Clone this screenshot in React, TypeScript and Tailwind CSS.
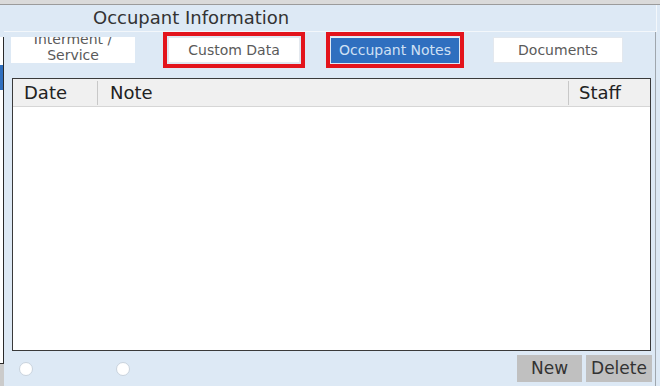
import React from "react";

const tabs = [
  { label: "Custom Data", ml: "ml-[33px]", w: "w-[132px]", marked: true, active: false },
  { label: "Occupant Notes", ml: "ml-[31px]", w: "w-[128px]", marked: true, active: true },
  { label: "Documents", ml: "ml-[34px]", w: "w-[130px]", marked: false, active: false },
];

function Radio() {
  return <div className="w-[14px] h-[14px] rounded-full bg-white border border-[#c9d3dd]" />;
}

export default function App() {
  return (
    <div
      className="w-[660px] h-[386px] bg-[#dde9f5] flex flex-col overflow-hidden"
      style={{ fontFamily: '"DejaVu Sans", sans-serif' }}
    >
      <div className="h-[5px] bg-[#dadada] border-b border-[#9b9b9b]" />
      <div className="flex flex-1 min-h-0">
        {/* edge of the neighbouring panel */}
        <div className="w-[4px] flex flex-col">
          <div className="h-[32px]" />
          <div className="h-[327px] bg-white border-r border-b border-[#2a2a2a] flex flex-col">
            <div className="h-[28px]" />
            <div className="h-[25px] bg-[#2f6fbf]" />
          </div>
          <div className="flex-1 bg-[#cbcbcb]" />
        </div>

        <div className="flex-1 flex flex-col">
          <div className="h-[27px] mr-[3px] border-r border-b border-[#f3f7fb] pl-[89px] flex items-center text-[18px] leading-none text-[#333333]">
            Occupant Information
          </div>

          <div className="border-r border-[#9fa6ad] mr-[4px] flex-1 flex flex-col">
            <div className="flex mt-[5px] h-[26px]">
              <div className="ml-[7px] w-[124px] h-[26px] bg-white overflow-hidden flex flex-col justify-end items-center text-[14px] leading-[16px] text-[#5a5a5a]">
                <span>Interment /</span>
                <span>Service</span>
              </div>
              {tabs.map((t) => (
                <div
                  key={t.label}
                  className={`${t.ml} ${t.w} h-[26px] flex items-center justify-center text-[14px] ${
                    t.active
                      ? "bg-[#2f6fbf] text-[#cfe0f4] border-t border-[#e8f0f8]"
                      : "bg-white text-[#5a5a5a] border border-[#e3e8ee]"
                  } ${t.marked ? "outline-4 outline-[#e3141c] outline-offset-1" : ""}`}
                >
                  {t.label}
                </div>
              ))}
            </div>

            <div className="ml-[8px] mt-[15px] w-[639px] h-[273px] border border-[#3a3a3a] bg-white flex flex-col">
              <div className="h-[28px] bg-[#f0f0f0] border-b border-[#d6d6d6] flex items-center text-[18px] text-[#222222]">
                <div className="w-[85px] h-[24px] border-r border-[#c8c8c8] pl-[11px] flex items-center">Date</div>
                <div className="flex-1 pl-[12px]">Note</div>
                <div className="w-[82px] h-[24px] border-l border-[#c8c8c8] pl-[10px] flex items-center">Staff</div>
              </div>
            </div>

            <div className="flex items-center h-[35px]">
              <div className="ml-[15px]">
                <Radio />
              </div>
              <div className="ml-[83px]">
                <Radio />
              </div>
              <div className="ml-auto mr-[3px] flex gap-[4px] text-[17px] text-[#333333]">
                <button className="w-[65px] h-[27px] bg-[#c0c0c0] flex items-center justify-center">New</button>
                <button className="w-[66px] h-[27px] bg-[#c0c0c0] flex items-center justify-center">Delete</button>
              </div>
            </div>
          </div>
        </div>
      </div>
    </div>
  );
}
